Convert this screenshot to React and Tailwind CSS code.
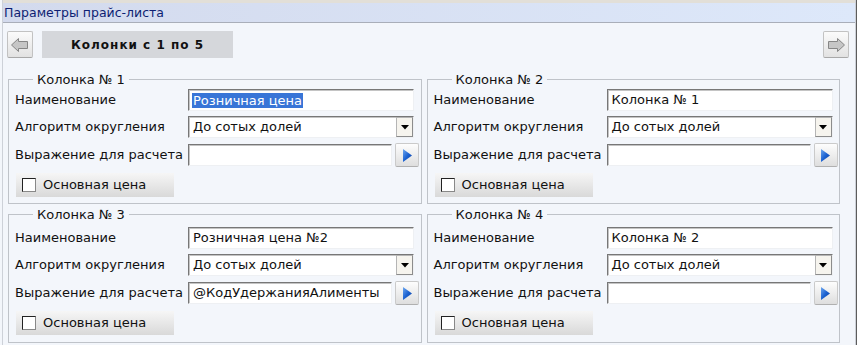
const font = { fontFamily: '"DejaVu Sans", Verdana, sans-serif' };

const NavArrow = ({ dir }) => (
  <svg width="18" height="14" viewBox="0 0 18 14">
    <polygon
      points={
        dir === "left"
          ? "0.5,7 7.5,0.5 7.5,3.5 16.5,3.5 16.5,10.5 7.5,10.5 7.5,13.5"
          : "17.5,7 10.5,0.5 10.5,3.5 1.5,3.5 1.5,10.5 10.5,10.5 10.5,13.5"
      }
      fill="#c6c6c6"
      stroke="#868686"
    />
  </svg>
);

const NavButton = ({ dir }) => (
  <button className="w-[26px] h-[27px] flex items-center justify-center rounded-[2px] border border-[#c2c2c2] border-b-[#a8a8a8] bg-gradient-to-b from-[#fbfbfb] to-[#e2e2e2]">
    <NavArrow dir={dir} />
  </button>
);

const inputBox =
  "h-[22px] bg-white border-t border-l border-t-[#777] border-l-[#777] border-r border-b border-r-[#eef0f3] border-b-[#eef0f3] shadow-[inset_1px_1px_0_#c4c4c4] flex items-center text-[13px] text-[#111] whitespace-nowrap overflow-hidden";

function Row({ label, children }) {
  return (
    <div className="flex items-center">
      <div className="w-[173px] text-[13px] text-[#111] whitespace-nowrap">{label}</div>
      {children}
    </div>
  );
}

function Column({ title, name, selected, expr, top, bottom }) {
  return (
    <fieldset className="border border-[#bfc3c9] pl-[6px]" style={{ paddingBottom: bottom }}>
      <legend className="ml-[18px] px-[4px] text-[13px] leading-[15px] text-[#111]">{title}</legend>
      <div className="flex flex-col gap-[5px]" style={{ marginTop: top }}>
        <Row label="Наименование">
          <div className={`${inputBox} w-[226px] pl-[3px]`}>
            {selected ? (
              <span className="bg-[#3875d7] text-white px-[1px] leading-[15px]">{name}</span>
            ) : (
              <span className="px-[1px]">{name}</span>
            )}
          </div>
        </Row>
        <Row label="Алгоритм округления">
          <div className={`${inputBox} w-[226px] pl-[4px] justify-between`}>
            <span>До сотых долей</span>
            <div className="w-[17px] h-[20px] flex items-center justify-center bg-[#f6f4ee] border border-[#b5b5b5] border-r-[#8c8c8c] border-b-[#8c8c8c]">
              <svg width="8" height="5" viewBox="0 0 8 5">
                <polygon points="0,0 8,0 4,4.5" fill="#000" />
              </svg>
            </div>
          </div>
        </Row>
        <Row label="Выражение для расчета">
          <div className={`${inputBox} w-[204px] pl-[4px]`}>{expr}</div>
          <button className="ml-[3px] w-[24px] h-[24px] flex items-center justify-center rounded-[2px] border border-[#cacaca] border-b-[#b0b0b0] bg-gradient-to-b from-[#fdfdfd] to-[#dedede]">
            <svg width="9" height="13" viewBox="0 0 9 13">
              <defs>
                <linearGradient id="blueTri" x1="0" y1="0" x2="1" y2="1">
                  <stop offset="0" stopColor="#6fa8ef" />
                  <stop offset="0.5" stopColor="#1d63d2" />
                  <stop offset="1" stopColor="#0b3f9e" />
                </linearGradient>
              </defs>
              <polygon points="0,0 9,6.5 0,13" fill="url(#blueTri)" />
            </svg>
          </button>
        </Row>
        <div className="mt-[1px] ml-[1px] w-[158px] h-[24px] flex items-center pl-[6px] bg-gradient-to-b from-[#f6f6f6] to-[#d9d9d9]">
          <div className="w-[14px] h-[14px] bg-white border border-[#222] border-r-[#888] border-b-[#888]" />
          <span className="ml-[7px] text-[13px] text-[#111]">Основная цена</span>
        </div>
      </div>
    </fieldset>
  );
}

export default function App() {
  return (
    <div className="w-[859px] h-[345px] overflow-hidden bg-white flex" style={font}>
      <div className="w-[2px] bg-[#f3f6fb]" />
      <div className="w-[854px] flex flex-col bg-[#f3f6fb] border-l border-r border-[#cdd1d8]">
        <div className="h-[3px] bg-[#e2dfd8]" />
        <div className="h-[20px] flex items-center pl-[1px] pt-[1px] bg-gradient-to-r from-[#d3daed] to-[#dde8fa] border-b border-[#a9aeb9] text-[12.5px] text-[#0e1f73]">
          Параметры прайс-листа
        </div>
        <div className="pt-[8px] pl-[4px] pr-[6px] flex items-center">
          <NavButton dir="left" />
          <div className="ml-[9px] w-[191px] h-[27px] flex items-center justify-center bg-[#d5d7db] text-[12px] font-bold tracking-[1px] text-[#111]">
            Колонки с 1 по 5
          </div>
          <div className="flex-1" />
          <NavButton dir="right" />
        </div>
        <div className="mt-[14px] ml-[5px] w-[832px] grid grid-cols-2 gap-x-[5px] gap-y-[3px]">
          <Column title="Колонка № 1" name="Розничная цена" selected expr="" top={2} bottom={6} />
          <Column title="Колонка № 2" name="Колонка № 1" expr="" top={2} bottom={6} />
          <Column title="Колонка № 3" name="Розничная цена №2" expr="@КодУдержанияАлименты" top={5} bottom={7} />
          <Column title="Колонка № 4" name="Колонка № 2" expr="" top={5} bottom={7} />
        </div>
      </div>
      <div className="w-[1px] bg-[#5c5c5c]" />
      <div className="flex-1 bg-white" />
    </div>
  );
}
